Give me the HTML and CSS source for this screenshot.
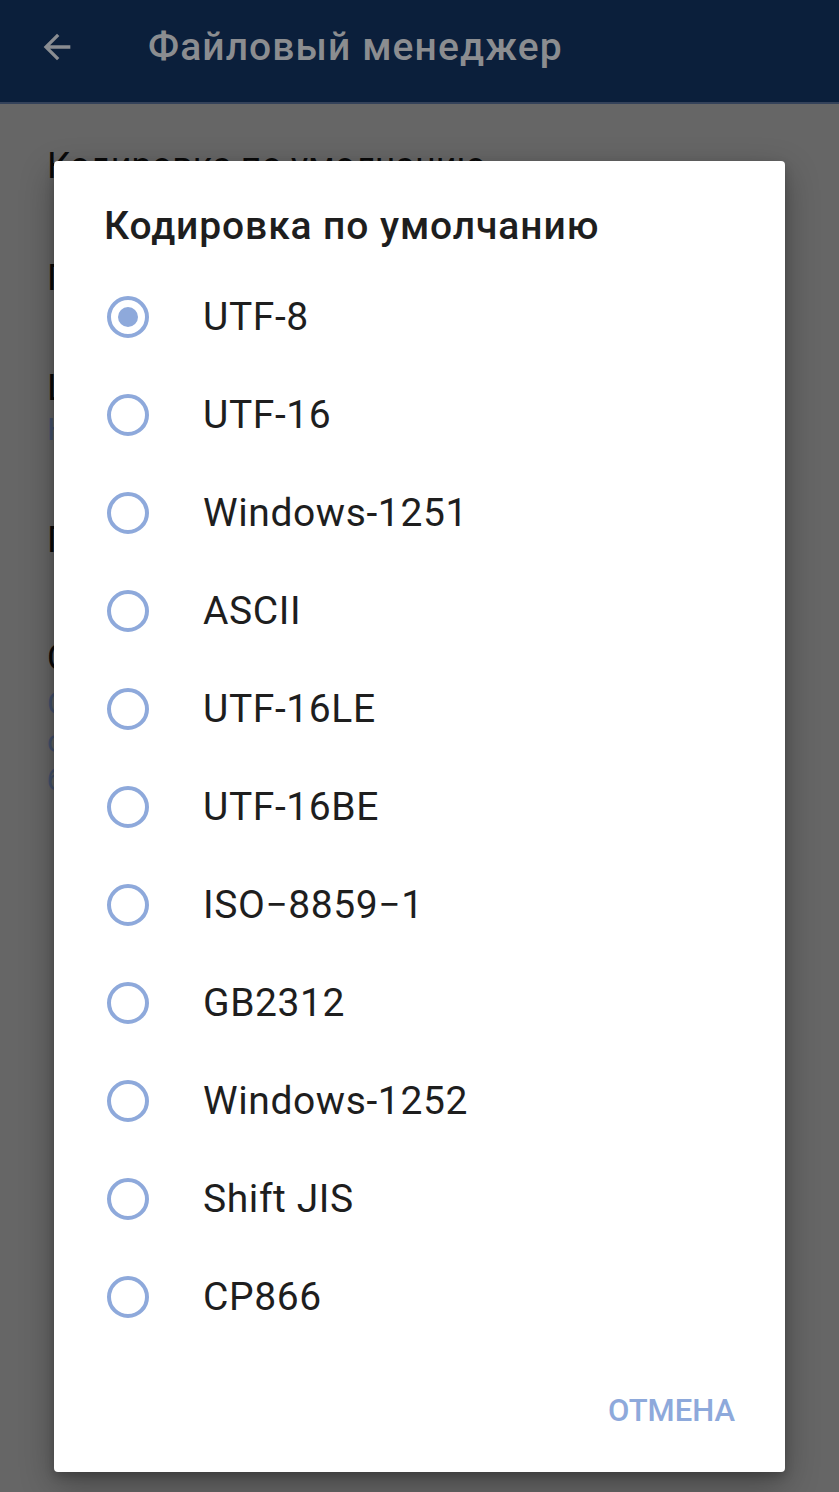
FILE: index.html
```html
<!DOCTYPE html>
<html lang="ru">
<head>
<meta charset="utf-8">
<title>Файловый менеджер</title>
<link rel="stylesheet" href="styles.css">
</head>
<body>
<header class="appbar">
  <svg class="back" width="40" height="40" viewBox="0 0 24 24"><path d="M20 11H7.83l5.59-5.59L12 4l-8 8 8 8 1.41-1.41L7.83 13H20v-2z" fill="currentColor"/></svg>
  <div class="appbar-title">Файловый менеджер</div>
</header>
<main class="settings">
  <div class="item i1"><div class="t">Кодировка по умолчанию</div></div>
  <div class="item i2"><div class="t">Показывать скрытые</div></div>
  <div class="item i3"><div class="t">Шрифт</div><div class="s">Нормальный</div></div>
  <div class="item i4"><div class="t">Показывать миниатюры</div></div>
  <div class="item i5"><div class="t">Сортировка</div><div class="s">Сортировать по имени,<br>сначала папки,<br>без учёта регистра</div></div>
</main>

<div class="dialog">
  <div class="dialog-title">Кодировка по умолчанию</div>
  <ul class="options">
    <li class="opt checked"><span class="radio"></span><span class="label">UTF-8</span></li>
    <li class="opt"><span class="radio"></span><span class="label">UTF-16</span></li>
    <li class="opt"><span class="radio"></span><span class="label">Windows-1251</span></li>
    <li class="opt"><span class="radio"></span><span class="label">ASCII</span></li>
    <li class="opt"><span class="radio"></span><span class="label">UTF-16LE</span></li>
    <li class="opt"><span class="radio"></span><span class="label">UTF-16BE</span></li>
    <li class="opt"><span class="radio"></span><span class="label">ISO−8859−1</span></li>
    <li class="opt"><span class="radio"></span><span class="label">GB2312</span></li>
    <li class="opt"><span class="radio"></span><span class="label">Windows-1252</span></li>
    <li class="opt"><span class="radio"></span><span class="label">Shift JIS</span></li>
    <li class="opt"><span class="radio"></span><span class="label">CP866</span></li>
  </ul>
  <div class="actions"><span class="btn">ОТМЕНА</span></div>
</div>
</body>
</html>
```
FILE: styles.css
```css
* { box-sizing: border-box; }
html, body { margin: 0; padding: 0; }
body {
  width: 839px;
  height: 1492px;
  overflow: hidden;
  background: #666666;
  font-family: Roboto, "Noto Sans", "Liberation Sans", sans-serif;
  position: relative;
}
.appbar {
  height: 104px;
  background: #0b1f3b;
  border-bottom: 2px solid #34425a;
  display: flex;
  align-items: center;
  padding-left: 37px;
  padding-bottom: 8px;
}
.back { color: #8a8d92; flex: none; }
.appbar-title {
  margin-left: 71px;
  font-size: 39px;
  font-weight: 500;
  color: #8b8d90;
  letter-spacing: 1.1px;
}
.settings { padding-left: 47px; }
.item { white-space: nowrap; overflow: hidden; }
.item .t { font-size: 36px; line-height: 44px; color: #0a0a0a; }
.item .s { font-size: 32px; line-height: 38px; color: #46536e; }
.i1 { margin-top: 40px; }
.i2 { margin-top: 68px; }
.i3 { margin-top: 66px; }
.i4 { margin-top: 70px; }
.i5 { margin-top: 74px; }
.i5 .s { margin-top: 4px; }

.dialog {
  position: absolute;
  left: 54px;
  top: 161px;
  width: 731px;
  height: 1311px;
  background: #ffffff;
  border-radius: 4px;
  box-shadow: 0 12px 34px rgba(0,0,0,0.32), 0 4px 10px rgba(0,0,0,0.2);
  padding: 40px 50px 34px 0;
  display: flex;
  flex-direction: column;
}
.dialog-title {
  padding-left: 50px;
  font-size: 39px;
  line-height: 50px;
  font-weight: 500;
  color: #1e1e1e;
  letter-spacing: 0.9px;
}
.options {
  list-style: none;
  margin: 17px 0 0;
  padding: 0;
}
.opt {
  height: 98px;
  display: flex;
  align-items: center;
  padding-left: 53px;
}
.radio {
  width: 42px;
  height: 42px;
  border: 4.5px solid #8ea9db;
  border-radius: 50%;
  flex: none;
  display: flex;
  align-items: center;
  justify-content: center;
}
.opt.checked .radio::after {
  content: "";
  width: 20px;
  height: 20px;
  border-radius: 50%;
  background: #8ea9db;
}
.label {
  margin-left: 54px;
  font-size: 39px;
  color: #1e1e1e;
  letter-spacing: 0.6px;
}
.actions {
  margin-top: auto;
  height: 56px;
  display: flex;
  align-items: center;
  justify-content: flex-end;
}
.btn {
  font-size: 31px;
  font-weight: 500;
  color: #8ea9db;
}
```
